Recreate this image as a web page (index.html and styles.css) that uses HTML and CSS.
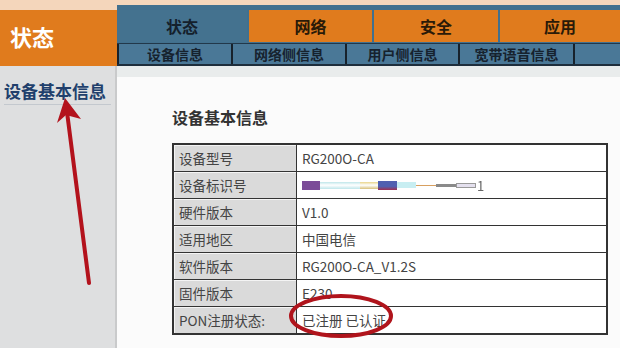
FILE: index.html
```html
<!DOCTYPE html>
<html>
<head>
  <meta charset="utf-8">
  <title>状态</title>
<link rel="stylesheet" href="styles.css">
</head>
<body>
<div class="page">
 <div class="topband"></div>
 <div class="header">
  <div class="brand">状态</div>
  <div class="nav">
   <div class="tabs">
    <div class="tab active" style="width:130px">状态</div>
    <div class="tab" style="width:123px">网络</div>
    <div class="tab" style="width:124px">安全</div>
    <div class="tab last">应用</div>
   </div>
   <div class="subnav">
    <div class="sub" style="width:112px">设备信息</div>
    <div class="sub" style="width:112px">网络侧信息</div>
    <div class="sub" style="width:111px">用户侧信息</div>
    <div class="sub" style="width:113px">宽带语音信息</div>
    <div class="sub rest"></div>
   </div>
  </div>
 </div>
 <div class="main">
  <div class="sidebar">
   <div class="sideitem">设备基本信息</div>
  </div>
  <div class="content">
   <div class="contentinner">
    <h4 class="title">设备基本信息</h4>
    <table class="info">
     <tr><td class="lbl">设备型号</td><td class="val">RG200O-CA</td></tr>
     <tr><td class="lbl">设备标识号</td><td class="val">
      <div class="blur">
       <span class="seg" style="width:18px;height:9px;background:#7b4c98"></span>
       <span class="seg" style="width:40px;height:7px;background:linear-gradient(#bfe6ea,#fff 45%,#bfe6ea)"></span>
       <span class="seg" style="width:18px;height:7px;background:linear-gradient(#e9d48a,#fff 45%,#d8c07a)"></span>
       <span class="seg" style="width:19px;height:9px;background:linear-gradient(#5060b0 60%,#a03050)"></span>
       <span class="seg" style="width:19px;height:6px;background:#c8eef2"></span>
       <span class="seg" style="width:20px;height:1px;background:#d8a060"></span>
       <span class="seg" style="width:20px;height:3px;background:#8a8a8a"></span>
       <span class="seg" style="width:20px;height:5px;background:#e4e0ee;border:1px solid #999"></span>
       <span class="tail">1</span>
      </div>
     </td></tr>
     <tr><td class="lbl">硬件版本</td><td class="val">V1.0</td></tr>
     <tr><td class="lbl">适用地区</td><td class="val">中国电信</td></tr>
     <tr><td class="lbl">软件版本</td><td class="val">RG200O-CA_V1.2S</td></tr>
     <tr><td class="lbl">固件版本</td><td class="val">E230</td></tr>
     <tr><td class="lbl">PON注册状态:</td><td class="val">已注册 已认证</td></tr>
    </table>
   </div>
  </div>
 </div>
 <svg class="marks" width="620" height="348" viewBox="0 0 620 348">
  <line x1="89" y1="283" x2="67" y2="112" stroke="#b3121c" stroke-width="4" stroke-linecap="round"/>
  <polygon points="65,98 57,123 66,115 81,119" fill="#b3121c"/>
  <ellipse cx="341" cy="316" rx="50" ry="20" fill="none" stroke="#b0141c" stroke-width="4"/>
 </svg>
</div>
</body>
</html>
```
FILE: styles.css
```css
body{
	margin: 0;
	font-family: "Noto Sans CJK SC", "Noto Sans", sans-serif;
}
.page{
	position: relative;
	width: 620px;
	height: 348px;
	overflow: hidden;
	background: #fbfbfb;
}
.topband{
	height: 5px;
	background: #f4d6bb;
}
.header{
	display: flex;
	height: 61px;
	background: #41708e;
}
.brand{
	width: 117px;
	box-sizing: border-box;
	border-top: 5px solid #f4d6bb;
	background: #e07b1d;
	color: #fff;
	font-size: 22px;
	font-weight: bold;
	padding: 10px 0 0 10px;
}
.nav{
	flex: 1;
	display: flex;
	flex-direction: column;
	padding-top: 5px;
}
.tabs{
	display: flex;
	gap: 2px;
	height: 33px;
}
.tab{
	background: #e07b1d;
	color: #2a1a08;
	font-size: 16px;
	font-weight: bold;
	display: flex;
	align-items: center;
	justify-content: center;
}
.tab.active{
	background: #44728f;
	color: #14202c;
}
.tab.last{
	flex: 1;
}
.subnav{
	display: flex;
	height: 21px;
	margin-top: 1px;
	border-top: 1px solid #22384a;
	border-bottom: 2px solid #1e2e3c;
	background: #4a7897;
}
.sub{
	border-left: 2px solid #17222c;
	color: #16222e;
	font-size: 14px;
	font-weight: bold;
	display: flex;
	align-items: center;
	justify-content: center;
}
.sub.rest{
	flex: 1;
}
.main{
	display: flex;
	height: 282px;
}
.sidebar{
	width: 115px;
	background: #dedfe0;
	border-right: 2px solid #c9cacb;
	padding-top: 14px;
}
.sideitem{
	margin: 0 4px 0 4px;
	padding-bottom: 2px;
	border-bottom: 1px solid #c3c8ce;
	color: #213f6c;
	font-size: 17px;
	font-weight: bold;
	line-height: 22px;
	white-space: nowrap;
}
.content{
	flex: 1;
	background: #e9ecec;
	padding-top: 11px;
}
.contentinner{
	height: 100%;
	background: #fbfbfb;
	padding: 29px 0 0 55px;
	box-sizing: border-box;
}
.title{
	margin: 0 0 15px 0;
	font-size: 16px;
	font-weight: bold;
	color: #333;
	line-height: 22px;
}
.info{
	width: 436px;
	border-collapse: collapse;
	border: 2px solid #333;
}
.info td{
	border: 1px solid #333;
	height: 26px;
	padding: 0 5px;
	font-size: 13.5px;
	color: #444;
}
.info td.lbl{
	width: 112px;
	background: #dadada;
	box-shadow: inset 1px 1px 0 #f4f4f4;
}
.info td.val{
	background: #fff;
}
.blur{
	display: flex;
	align-items: center;
	filter: blur(0.4px);
}
.seg{
	display: inline-block;
	box-sizing: border-box;
}
.tail{
	font-size: 13px;
	color: #666;
	margin-left: 1px;
}
.marks{
	position: absolute;
	left: 0;
	top: 0;
}
```
